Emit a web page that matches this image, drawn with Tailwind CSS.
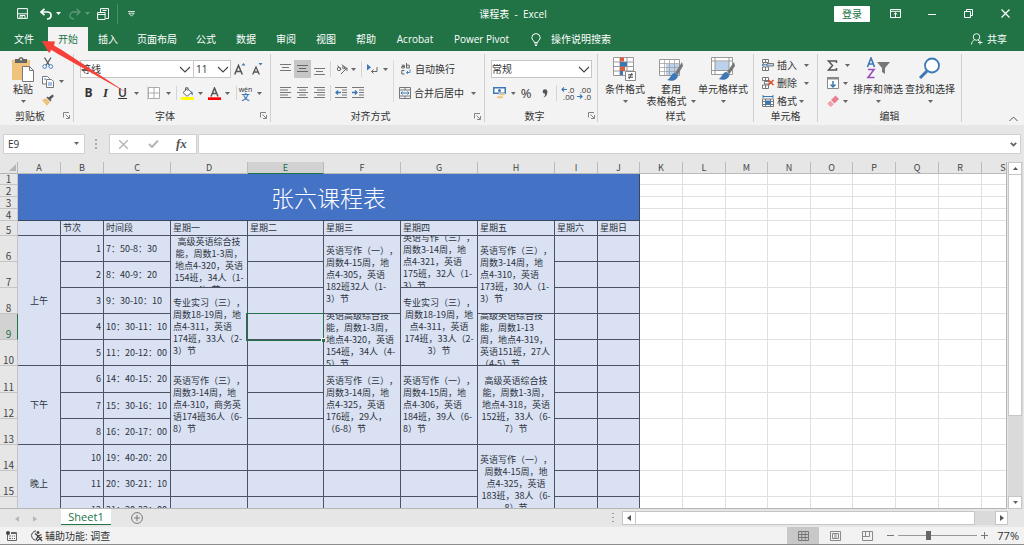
<!DOCTYPE html>
<html lang="zh-CN">
<head>
<meta charset="utf-8">
<title>课程表 - Excel</title>
<script src="https://cdn.jsdelivr.net/npm/@tailwindcss/browser@4"></script>
</head>
<body class="flex h-screen flex-col overflow-hidden bg-[#e6e6e6] font-['Open_Sans','Noto_Sans_CJK_SC',sans-serif] text-[10px] leading-3 text-[#333]">
<svg class="hidden">
  <symbol id="caret" viewBox="0 0 5 3"><path d="M0 0h5L2.5 3z" fill="#666"/></symbol>
  <symbol id="chev" viewBox="0 0 12 7"><path d="M1 1l5 5 5-5" fill="none" stroke="#444" stroke-width="1.1"/></symbol>
  <symbol id="launch" viewBox="0 0 7 7"><path d="M.5 5.500V.5H6M2.500 2.500L6 6M6.500 3v3.500H3" fill="none" stroke="#777" stroke-width=".9"/></symbol>
</svg>

<!-- Title bar -->
<header class="flex h-[27px] shrink-0 items-center bg-[#217346] text-white">
  <div class="flex flex-1 items-center pl-4">
    <button aria-label="保存" class="ml-px w-[11px]"><svg class="h-[11px] w-[11px]" viewBox="0 0 11 11" fill="none" stroke="#fff"><path d="M.6.6h9.800v9.800H.6zM.6 5.800h9.800M3 10V7.500h5V10M5 8v2"/></svg></button>
    <button aria-label="撤消" class="ml-3 w-3"><svg class="h-3 w-3" viewBox="0 0 12 12" fill="none" stroke="#fff" stroke-width="1.700"><path d="M4.500.8L1 4l3.500 3.200M1.200 4H7c2.500 0 4 1.300 4 3.300S9.500 11 7 11"/></svg></button>
    <svg class="ml-1 h-[3px] w-[5px]" viewBox="0 0 5 3"><path d="M0 0h5L2.500 3z" fill="#fff"/></svg>
    <button aria-label="恢复" class="ml-2 w-3"><svg class="h-3 w-3" viewBox="0 0 12 12" fill="none" stroke="#5a9a78" stroke-width="1.300"><path d="M7.500.8L11 4 7.500 7.200M10.800 4H5C2.500 4 1 5.300 1 7.300S2.500 11 5 11"/></svg></button>
    <svg class="ml-1 h-[3px] w-[5px]" viewBox="0 0 5 3"><path d="M0 0h5L2.500 3z" fill="#5a9a78"/></svg>
    <button aria-label="窗口" class="ml-[7px] w-3"><svg class="h-3 w-3" viewBox="0 0 12 12" fill="none" stroke="#fff"><path d="M3.500 4V.6h8v9.900h-3M.6 4.500h7.500v7H.6zM.6 6.500h7.500M5.500 2.500h4"/></svg></button>
    <span class="ml-2 h-5 w-px bg-[#4b8d69]"></span>
    <button aria-label="自定义快速访问工具栏" class="ml-[10px] w-[7px]"><svg class="h-[6px] w-[7px]" viewBox="0 0 7 6" fill="none" stroke="#fff" stroke-width=".8"><path d="M0 .5h7M.8 2.200h5.400L3.500 5.200z"/></svg></button>
  </div>
  <h1 class="text-center whitespace-pre">课程表  -  Excel</h1>
  <div class="flex flex-1 items-center justify-end pr-[14px]">
    <button class="h-4 w-9 rounded-[1px] bg-white text-[#217346]">登录</button>
    <button aria-label="功能区显示选项" class="ml-5 w-[11px]"><svg class="h-[9px] w-[11px]" viewBox="0 0 11 9" fill="none" stroke="#fff"><path d="M.5.5h10v8H.5zM.5 2.300h10M5.500 8V4M3.700 5.500l1.800-1.700 1.800 1.700"/></svg></button>
    <button aria-label="最小化" class="ml-[27px] w-2"><svg class="h-2 w-2" viewBox="0 0 8 8" stroke="#fff"><path d="M0 4.500h8"/></svg></button>
    <button aria-label="还原" class="ml-7 w-[9px]"><svg class="h-[9px] w-[9px]" viewBox="0 0 9 9" fill="none" stroke="#fff"><path d="M2.500 2.500v-2h6v6h-2M.5 2.500h6v6h-6z"/></svg></button>
    <button aria-label="关闭" class="ml-7 w-[9px]"><svg class="h-[9px] w-[9px]" viewBox="0 0 9 9" stroke="#fff" stroke-width="1.200"><path d="M.5.500l8 8M8.500.5l-8 8"/></svg></button>
  </div>
</header>

<!-- Ribbon tabs -->
<nav class="flex h-6 shrink-0 items-stretch bg-[#217346] text-white">
  <button class="w-12">文件</button>
  <button class="w-10 bg-[#f3f3f3] text-[#217346]">开始</button>
  <button class="w-10">插入</button>
  <button class="w-[58px]">页面布局</button>
  <button class="w-10">公式</button>
  <button class="w-10">数据</button>
  <button class="w-10">审阅</button>
  <button class="w-10">视图</button>
  <button class="w-10">帮助</button>
  <button class="w-[58px]">Acrobat</button>
  <button class="w-[75px]">Power Pivot</button>
  <button class="flex items-center gap-[10px] pl-3"><svg class="h-[13px] w-[10px]" viewBox="0 0 10 13" fill="none" stroke="#fff"><path d="M3.300 9.500c0-2-2.500-2.500-2.500-5A4.200 4.200 0 0 1 5 .6a4.200 4.200 0 0 1 4.200 3.900c0 2.500-2.500 3-2.500 5zM3.500 11h3M4 12.500h2"/></svg>操作说明搜索</button>
  <button class="ml-auto flex items-center gap-1 pr-[17px]"><svg class="h-3 w-3" viewBox="0 0 12 12" fill="none" stroke="#fff" stroke-width=".9"><circle cx="5.500" cy="4" r="3.300"/><path d="M.5 11.500c.3-3 1.500-4 3-4.500M7 7l1.500 1.500M9 7.500v4M7 9.500h4.500"/></svg>共享</button>
</nav>

<!-- Ribbon -->
<section class="flex h-[74px] shrink-0 items-stretch bg-[#f3f3f3] py-[3px]">
  <!-- Clipboard -->
  <div class="flex w-[74px] flex-col border-r border-[#cfcfcf]">
    <div class="flex h-[60px] pt-[3px]">
      <button class="ml-[10px] flex w-[26px] flex-col items-center">
        <svg class="h-[26px] w-6 shrink-0" viewBox="0 0 24 26"><path d="M1 3h18v20H1z" fill="#efc37c"/><path d="M4 2h3.500c0-2.500 5-2.500 5 0H16v4H4z" fill="#666"/><circle cx="10" cy="2.500" r="1" fill="#f3f3f3"/><path d="M11.500 9.500h7l4 4v11h-11z" fill="#fff" stroke="#777"/><path d="M18.500 9.500v4h4" fill="none" stroke="#777"/></svg>
        <span class="whitespace-nowrap">粘贴</span>
        <svg class="mt-[5px] h-[3px] w-[5px]"><use href="#caret"/></svg>
      </button>
      <div class="ml-[6px] flex flex-col gap-[6px]">
        <button aria-label="剪切" class="h-3"><svg class="h-3 w-3" viewBox="0 0 12 12" fill="none"><path d="M2.500.5l5 8M9 .5l-5 8" stroke="#555" stroke-width="1.300"/><circle cx="2.700" cy="9.500" r="1.900" stroke="#4a86c0"/><circle cx="8.800" cy="9.500" r="1.900" stroke="#4a86c0"/></svg></button>
        <button aria-label="复制" class="flex h-[13px] items-center gap-[5px]"><svg class="h-3 w-3" viewBox="0 0 12 12" stroke="#777" fill="#fff"><path d="M.5.500h5l2 2v5.500h-7z"/><path d="M4.500 3.500h5l2 2v6h-7z"/><path d="M2 3h2M6 7h4M6 9h4" stroke="#4a86c0"/></svg><svg class="h-[3px] w-[5px]"><use href="#caret"/></svg></button>
        <button aria-label="格式刷" class="h-3"><svg class="h-3 w-3" viewBox="0 0 12 12"><path d="M0 6l4-2 4 4-3 4z" fill="#efc37c"/><path d="M4.500 3.500l4 4 1-1-1-1L12 2l-1.500-1.500L6.500 3.500l-1-1z" fill="#555"/></svg></button>
      </div>
    </div>
    <div class="flex h-[13px] items-center justify-between pr-[3px] pl-[15px]"><span>剪贴板</span><button aria-label="剪贴板选项"><svg class="h-[7px] w-[7px]"><use href="#launch"/></svg></button></div>
  </div>

  <!-- Font -->
  <div class="flex w-[197px] flex-col border-r border-[#cfcfcf]">
    <div class="h-[60px] pt-[6px]">
      <div class="flex h-[18px] items-center pl-[6px]">
        <div class="relative h-[18px] w-[114px]"><select aria-label="字体" class="h-full w-full appearance-none border border-[#c6c6c6] bg-white"><option>等线</option></select><svg class="pointer-events-none absolute top-[6px] right-[3px] h-[7px] w-3"><use href="#chev"/></svg></div>
        <div class="relative h-[18px] w-[37px]"><select aria-label="字号" class="h-full w-full appearance-none border border-l-0 border-[#c6c6c6] bg-white pl-[2px]"><option>11</option></select><svg class="pointer-events-none absolute top-[6px] right-[2px] h-[7px] w-3"><use href="#chev"/></svg></div>
        <button aria-label="增大字号" class="ml-[3px]"><svg class="h-3 w-3" viewBox="0 0 12 12"><path d="M.7 11.500L4.500 2.500l3.800 9M2 8.500h5" fill="none" stroke="#555" stroke-width="1.500"/><path d="M7.500 2.500L9.500 0l2 2.500z" fill="#3b78b5"/></svg></button>
        <button aria-label="减小字号" class="ml-[6px]"><svg class="h-3 w-3" viewBox="0 0 12 12"><path d="M.7 11.500L4 4l3.300 7.500M2 9h4" fill="none" stroke="#555" stroke-width="1.300"/><path d="M6.500 0h4l-2 2.500z" fill="#3b78b5"/></svg></button>
      </div>
      <div class="mt-[6px] flex h-[18px] items-center pl-[9px]">
        <button class="w-[11px] text-[12px] font-bold">B</button>
        <button class="ml-[6px] w-[11px] font-['Liberation_Serif'] text-[13px] font-bold italic">I</button>
        <button class="ml-[6px] w-[11px] text-[12px] font-semibold underline">U</button>
        <svg class="ml-[6px] h-[3px] w-[5px]"><use href="#caret"/></svg>
        <span class="ml-[8px] h-[14px] w-px bg-[#d5d5d5]"></span>
        <button aria-label="边框"><svg class="h-3 w-3" viewBox="0 0 12 12" fill="#fff" stroke="#aaa"><path d="M.5.5h11v11H.5zM6 .5v11M.5 6h11"/></svg></button>
        <svg class="ml-[6px] h-[3px] w-[5px]"><use href="#caret"/></svg>
        <span class="ml-[5px] h-[14px] w-px bg-[#d5d5d5]"></span>
        <button aria-label="填充颜色" class="ml-1"><svg class="h-[13px] w-[13px]" viewBox="0 0 13 13"><path d="M2 5.500L6.500 1.500l4 4-4.500 3.800z" fill="#fff" stroke="#666"/><path d="M4.500 4V.8h2.500v3" fill="none" stroke="#666"/><path d="M10.500 4c1.500 1 1.500 3 1 4.500l-1.500-2z" fill="#3b78b5"/><path d="M0 10h13v3H0z" fill="#ff0"/></svg></button>
        <svg class="ml-1 h-[3px] w-[5px]"><use href="#caret"/></svg>
        <button aria-label="字体颜色" class="ml-[5px]"><svg class="h-[13px] w-[13px]" viewBox="0 0 13 13"><path d="M3 9.500L6.500 1l3.500 8.500M4 6.500h5" fill="none" stroke="#555" stroke-width="1.500"/><path d="M0 10.300h13v2.700H0z" fill="red"/></svg></button>
        <svg class="ml-1 h-[3px] w-[5px]"><use href="#caret"/></svg>
        <span class="ml-[6px] h-[14px] w-px bg-[#d5d5d5]"></span>
        <button class="ml-px flex w-[15px] flex-col items-center text-[7px] leading-[6px]"><span>wén</span><span class="text-[8px] leading-[7px] font-bold text-[#3b78b5]">文</span></button>
        <svg class="ml-1 h-[3px] w-[5px]"><use href="#caret"/></svg>
      </div>
    </div>
    <div class="flex h-[13px] items-center pr-[3px]"><span class="flex-1 pr-3 pl-2 text-center">字体</span><button aria-label="字体选项"><svg class="h-[7px] w-[7px]"><use href="#launch"/></svg></button></div>
  </div>

  <!-- Alignment -->
  <div class="flex w-[214px] flex-col border-r border-[#cfcfcf]">
    <div class="flex h-[60px] pt-[6px] pb-2">
      <div class="w-[123px] border-r border-[#dcdcdc] pl-[6px]">
        <div class="flex h-[18px] items-center">
          <button aria-label="顶端对齐" class="flex h-[18px] w-[17px] items-center justify-center"><svg class="h-3 w-[11px]" viewBox="0 0 11 12" stroke="#777"><path d="M0 1.500h11M2 4.500h7M0 7.500h11"/></svg></button>
          <button aria-label="垂直居中" class="flex h-[18px] w-[17px] items-center justify-center bg-[#c6c6c6]"><svg class="h-3 w-[11px]" viewBox="0 0 11 12" stroke="#666"><path d="M0 2.500h11M2 5.500h7M0 8.500h11"/></svg></button>
          <button aria-label="底端对齐" class="flex h-[18px] w-[17px] items-center justify-center"><svg class="h-3 w-[11px]" viewBox="0 0 11 12" stroke="#777"><path d="M0 5.500h11M2 8.500h7M0 11.500h11"/></svg></button>
          <span class="ml-[2px] h-4 w-px bg-[#d5d5d5]"></span>
          <button aria-label="方向" class="ml-[5px]"><svg class="h-3 w-3" viewBox="0 0 12 12" fill="none" stroke="#666"><circle cx="3" cy="6" r="1.700"/><path d="M1.500 2.500l3.500 4M6 1.500l3 4M5 11l6-6M11 8V5H8"/><circle cx="7.700" cy="4.500" r="1.300"/></svg></button>
          <svg class="ml-[3px] h-[3px] w-[5px]"><use href="#caret"/></svg>
          <span class="ml-[5px] h-4 w-px bg-[#d5d5d5]"></span>
          <button aria-label="文字方向" class="ml-1"><svg class="h-3 w-3" viewBox="0 0 12 12" fill="none"><path d="M1 1l4 3.200L1 7.500z" fill="#3b78b5"/><path d="M11 4v4.500H5.500M7.500 6.500l-2 2 2 2" stroke="#666"/></svg></button>
          <svg class="ml-[5px] h-[3px] w-[5px]"><use href="#caret"/></svg>
        </div>
        <div class="mt-[6px] flex h-[18px] items-center">
          <button aria-label="左对齐" class="flex w-[17px] justify-center"><svg class="h-3 w-[11px]" viewBox="0 0 11 12" stroke="#777"><path d="M0 .5h11M0 3h8M0 5.500h11M0 8h8M0 10.500h11"/></svg></button>
          <button aria-label="居中" class="flex w-[17px] justify-center"><svg class="h-3 w-[11px]" viewBox="0 0 11 12" stroke="#777"><path d="M0 .5h11M2 3h7M0 5.500h11M2 8h7M0 10.500h11"/></svg></button>
          <button aria-label="右对齐" class="flex w-[17px] justify-center"><svg class="h-3 w-[11px]" viewBox="0 0 11 12" stroke="#777"><path d="M0 .5h11M3 3h8M0 5.500h11M3 8h8M0 10.500h11"/></svg></button>
          <span class="ml-[2px] h-4 w-px bg-[#d5d5d5]"></span>
          <button aria-label="减少缩进量" class="ml-1"><svg class="h-3 w-3" viewBox="0 0 12 12" fill="none" stroke="#777"><path d="M0 .5h12M7 3h5M7 5.500h5M7 8h5M0 10.500h12"/><path d="M6 5.500H1M3 3.500l-2 2 2 2" stroke="#3b78b5" stroke-width="1.300"/></svg></button>
          <button aria-label="增加缩进量" class="ml-[5px]"><svg class="h-3 w-3" viewBox="0 0 12 12" fill="none" stroke="#777"><path d="M0 .5h12M7 3h5M7 5.500h5M7 8h5M0 10.500h12"/><path d="M0 5.500h5M3 3.500l2 2-2 2" stroke="#3b78b5" stroke-width="1.300"/></svg></button>
        </div>
      </div>
      <div class="flex-1 pl-[5px]">
        <button class="flex h-[18px] items-center gap-1 pl-[2px]"><svg class="h-3 w-[10px]" viewBox="0 0 10 12" fill="none" stroke="#555" stroke-width=".9"><path d="M.8 2.200h2.500V5H.8V3.500h2.500M5.500 0v5h2.800V2.200H5.500M3.500 7.500H.8v3.500h2.700"/><path d="M9 6.500v3H5.500M7 8L5.500 9.500 7 11" stroke="#3b78b5"/></svg>自动换行</button>
        <button class="mt-[6px] flex h-[18px] items-center gap-[3px]"><svg class="h-3 w-3" viewBox="0 0 12 12" fill="none" stroke="#777"><path d="M.5.5h11v11H.5zM.5 3h11M.5 9h11M6 .5V3M6 9v2.500"/><path d="M2 6h8M3.500 4.500L2 6l1.500 1.500M8.500 4.500L10 6 8.500 7.500" stroke="#3b78b5"/></svg>合并后居中<svg class="ml-1 h-[3px] w-[5px]"><use href="#caret"/></svg></button>
      </div>
    </div>
    <div class="flex h-[13px] items-center pr-[3px]"><span class="flex-1 pr-1 text-center">对齐方式</span><button aria-label="对齐选项"><svg class="h-[7px] w-[7px]"><use href="#launch"/></svg></button></div>
  </div>

  <!-- Number -->
  <div class="flex w-[113px] flex-col border-r border-[#cfcfcf]">
    <div class="h-[60px] px-[6px] pt-[6px]">
      <div class="relative h-[18px] w-[101px]"><select aria-label="数字格式" class="h-full w-full appearance-none border border-[#c6c6c6] bg-white"><option>常规</option></select><svg class="pointer-events-none absolute top-[6px] right-[2px] h-[7px] w-3"><use href="#chev"/></svg></div>
      <div class="mt-[6px] flex h-[18px] items-center">
        <button aria-label="会计数字格式" class="ml-[2px]"><svg class="h-3 w-[13px]" viewBox="0 0 13 12"><path d="M0 0h13v7H0z" fill="#3b78b5"/><path d="M1.500 1.500h10v4h-10z" fill="#fff"/><circle cx="6.500" cy="3.500" r="1.500" fill="#3b78b5"/><path d="M6 6.500h6v2H6zM4 9h6v2.500H4z" fill="#efc37c" stroke="#f3f3f3" stroke-width=".5"/></svg></button>
        <svg class="ml-[5px] h-[3px] w-[5px]"><use href="#caret"/></svg>
        <button class="ml-1 w-[14px] text-[13px]">%</button>
        <button aria-label="千位分隔样式" class="ml-[9px]"><svg class="h-[9px] w-[6px]" viewBox="0 0 6 9" fill="#555"><circle cx="3" cy="2.500" r="2.300"/><path d="M5.300 2.500C5.500 6 4 7.500 1.500 8.500c1.500-1.500 2-3 1.500-5z"/></svg></button>
        <span class="ml-2 h-4 w-px bg-[#d5d5d5]"></span>
        <button aria-label="增加小数位数" class="ml-1 flex w-[14px] flex-col items-end text-[8px] leading-[7px]"><span class="flex items-center gap-px"><svg class="h-[5px] w-[6px]" viewBox="0 0 6 5" fill="none" stroke="#3b78b5" stroke-width="1.200"><path d="M6 2.500H1M3 .5l-2 2 2 2"/></svg>.0</span><span>.00</span></button>
        <button aria-label="减少小数位数" class="ml-[3px] flex w-[14px] flex-col items-end text-[8px] leading-[7px]"><span>.00</span><span class="flex items-center gap-px"><svg class="h-[5px] w-[6px]" viewBox="0 0 6 5" fill="none" stroke="#3b78b5" stroke-width="1.200"><path d="M0 2.500h5M3 .5l2 2-2 2"/></svg>.0</span></button>
      </div>
    </div>
    <div class="flex h-[13px] items-center pr-[2px]"><span class="flex-1 pr-1 text-center">数字</span><button aria-label="数字选项"><svg class="h-[7px] w-[7px]"><use href="#launch"/></svg></button></div>
  </div>

  <!-- Styles -->
  <div class="flex w-[156px] flex-col border-r border-[#cfcfcf]">
    <div class="flex h-[60px] pt-[3px] pl-1">
      <button class="flex w-[46px] flex-col items-center"><svg class="h-[26px] w-6 shrink-0" viewBox="0 0 24 26"><path d="M.5.5h20v18H.5zM.5 5h20M.5 9.500h20M.5 14h20M7 .5v18M14 .5v18" fill="#fff" stroke="#999"/><path d="M7 .5h4v4H7zM7 9.500h5V14H7z" fill="#dc5b3d"/><path d="M7 5h7v4.500H7zM7 14h3v4H7z" fill="#3b78b5"/><path d="M12.500 14.500h10v9h-10z" fill="#fff" stroke="#888"/><path d="M15 17.800h5M15 20.200h5M19 16l-3 6" stroke="#444"/></svg><span class="whitespace-nowrap">条件格式</span><svg class="mt-[5px] h-[3px] w-[5px]"><use href="#caret"/></svg></button>
      <button class="flex w-[46px] flex-col items-center"><svg class="h-[26px] w-6 shrink-0" viewBox="0 0 24 26"><path d="M.5 2.500h20v16H.5z" fill="#fff" stroke="#999"/><path d="M7 7h13v11H7z" fill="#bcd2ec"/><path d="M.5 6.500h20M.5 10.500h20M.5 14.500h20M5.500 2.500v16M10.500 2.500v16M15.500 2.500v16" fill="none" stroke="#999" stroke-width=".7"/><path d="M23 5l-7 11 2.500 2L24 9z" fill="#777"/><path d="M16 16c-4 0-4 5-8 7 5 1.500 10 1 11-4.500z" fill="#3b78b5"/></svg><span>套用</span><span class="flex items-center gap-1 whitespace-nowrap">表格格式<svg class="h-[3px] w-[5px]"><use href="#caret"/></svg></span></button>
      <button class="ml-1 flex w-[50px] flex-col items-center"><svg class="h-[26px] w-6 shrink-0" viewBox="0 0 24 26"><path d="M.5.5h21v17H.5z" fill="#fff" stroke="#999"/><path d="M4 4.500h14v9H4z" fill="#bcd2ec"/><path d="M.5 4h21M.5 13.500h21M4 .5v17M18 .5v17" fill="none" stroke="#999"/><path d="M23 5l-7 10 2.500 2L24 9z" fill="#777"/><path d="M15.500 15c-4 0-4 5-8 7 5 1.500 10 1 11-4.500z" fill="#3b78b5"/></svg><span class="whitespace-nowrap">单元格样式</span><svg class="mt-[5px] h-[3px] w-[5px]"><use href="#caret"/></svg></button>
    </div>
    <span class="text-center">样式</span>
  </div>

  <!-- Cells -->
  <div class="flex w-16 flex-col border-r border-[#cfcfcf]">
    <div class="flex h-[60px] flex-col items-start pt-[2px] pl-2">
      <button class="flex h-[18px] items-center"><svg class="mr-[3px] h-3 w-3" viewBox="0 0 12 12" fill="#fff" stroke="#777"><path d="M.5.5h6v3h-6zM.5 8h6v3.500h-6zM3.500.5v3M3.500 8v3.500"/><path d="M5 4.500h6.500V7H5z" fill="#bcd2ec"/><path d="M5 5.800H0M2 4L0 5.800 2 7.500" fill="none" stroke="#3b78b5"/></svg>插入<svg class="ml-[7px] h-[3px] w-[5px]"><use href="#caret"/></svg></button>
      <button class="flex h-[18px] items-center"><svg class="mr-[3px] h-3 w-3" viewBox="0 0 12 12" fill="#fff" stroke="#777"><path d="M.5.5h6v3h-6zM.5 8h6v3.500h-6zM3.500.5v3M3.500 8v3.500M2.500 4.500H7V7H2.500z"/><path d="M6.500 3l5 5M11.500 3l-5 5" stroke="#dc4b2d" stroke-width="1.500"/></svg>删除<svg class="ml-[7px] h-[3px] w-[5px]"><use href="#caret"/></svg></button>
      <button class="flex h-[18px] items-center"><svg class="mr-[3px] h-3 w-3" viewBox="0 0 12 12" fill="#fff" stroke="#777"><path d="M.5 4h11v7.500H.5zM.5 6.500h11M.5 9.500h11M3.500 4v7.500M8.500 4v7.500"/><path d="M3.500 5.500h5V10h-5z" fill="#3b78b5" stroke="none"/><path d="M1 1.500h10M1 0v3M11 0v3" stroke="#3b78b5"/></svg>格式<svg class="ml-[2px] h-[3px] w-[5px]"><use href="#caret"/></svg></button>
    </div>
    <span class="text-center">单元格</span>
  </div>

  <!-- Editing -->
  <div class="flex w-[144px] flex-col border-r border-[#cfcfcf]">
    <div class="flex h-[60px] pl-[9px]">
      <div class="flex w-[26px] flex-col items-start pt-[2px]">
        <button aria-label="自动求和" class="flex h-[18px] items-center gap-[7px]"><svg class="h-[11px] w-[11px]" viewBox="0 0 11 11" fill="none" stroke="#555" stroke-width="1.500"><path d="M9.500 3V1H1.500l4 4.500-4 4.500h8V8"/></svg><svg class="h-[3px] w-[5px]"><use href="#caret"/></svg></button>
        <button aria-label="填充" class="flex h-[18px] items-center gap-1"><svg class="h-3 w-3" viewBox="0 0 12 12"><path d="M.5.5h11v11H.5z" fill="#fff" stroke="#888"/><path d="M0 0h12v2.500H0z" fill="#888"/><path d="M6 4v6M3.500 7.500L6 10l2.500-2.500" fill="none" stroke="#3b78b5" stroke-width="1.500"/></svg><svg class="h-[3px] w-[5px]"><use href="#caret"/></svg></button>
        <button aria-label="清除" class="flex h-[18px] items-center gap-1"><svg class="h-3 w-3" viewBox="0 0 12 12"><path d="M4 5l4.500-4.500L12 4 7.500 8.500z" fill="#e87f90"/><path d="M3.300 5.700L6.800 9.200 4.500 11.500H3L.8 9.300V8z" fill="#f0a0ac"/></svg><svg class="h-[3px] w-[5px]"><use href="#caret"/></svg></button>
      </div>
      <button class="flex w-[50px] flex-col items-center pt-[3px]"><svg class="h-[26px] w-6 shrink-0" viewBox="0 0 24 26" fill="none" stroke-width="1.600"><path d="M1.500 10L5 1l3.500 9M2.500 7h5" stroke="#3b78b5"/><path d="M2 12.500h6L2 20.500h6.500" stroke="#9a4fc0"/><path d="M11 5h13l-5 6v6l-3-2v-4z" fill="#777"/></svg><span class="whitespace-nowrap">排序和筛选</span><svg class="mt-[5px] h-[3px] w-[5px]"><use href="#caret"/></svg></button>
      <button class="ml-[2px] flex w-[50px] flex-col items-center pt-[3px]"><svg class="h-[26px] w-6 shrink-0" viewBox="0 0 24 26" fill="none" stroke="#3b78b5"><circle cx="14" cy="8.500" r="7" fill="#fff" stroke-width="1.800"/><path d="M9 14l-7 7" stroke-width="3"/></svg><span class="whitespace-nowrap">查找和选择</span><svg class="mt-[5px] h-[3px] w-[5px]"><use href="#caret"/></svg></button>
    </div>
    <span class="text-center">编辑</span>
  </div>
  <button aria-label="折叠功能区" class="mt-auto mr-[6px] ml-auto"><svg class="h-[6px] w-[9px]" viewBox="0 0 9 6" fill="none" stroke="#555"><path d="M.5 5l4-4 4 4"/></svg></button>
</section>

<!-- Formula bar -->
<section class="flex h-[37px] shrink-0 items-start pt-[9px] pr-[3px] pl-[3px]">
  <div class="relative h-5 w-[82px]"><input aria-label="名称框" value="E9" class="h-full w-full border border-[#d0d0d0] bg-white pl-1"><svg class="pointer-events-none absolute top-2 right-[6px] h-[3px] w-[5px]"><use href="#caret"/></svg></div>
  <svg class="mt-[5px] ml-[10px] h-[10px] w-[2px]" viewBox="0 0 2 10" fill="#aaa"><path d="M0 0h2v2H0zM0 4h2v2H0zM0 8h2v2H0z"/></svg>
  <div class="ml-3 flex h-5 w-[88px] items-center border border-[#d0d0d0] bg-white">
    <button aria-label="取消" class="ml-[9px]"><svg class="h-[9px] w-[9px]" viewBox="0 0 9 9" stroke="#b5b5b5" stroke-width="1.400"><path d="M0 0l9 9M9 0L0 9"/></svg></button>
    <button aria-label="输入" class="ml-5"><svg class="h-2 w-[11px]" viewBox="0 0 11 8" fill="none" stroke="#b5b5b5" stroke-width="2"><path d="M1 4l3 3 6-6.500"/></svg></button>
    <button aria-label="插入函数" class="ml-[17px] font-['Liberation_Serif'] text-[13px] font-bold text-[#555] italic">fx</button>
  </div>
  <div class="relative ml-px h-5 flex-1"><input aria-label="编辑栏" class="h-full w-full border border-[#d0d0d0] bg-white"><svg class="pointer-events-none absolute top-[8px] right-1 h-[5px] w-[7px]" viewBox="0 0 7 5" fill="none" stroke="#666" stroke-width="1.800"><path d="M.8.800l2.700 2.700L6.200.8"/></svg></div>
</section>

<!-- Worksheet -->
<main class="flex min-h-0 flex-1">
  <div class="relative min-w-0 flex-1 overflow-hidden border-r border-b border-[#b5b5b5]">
    <table id="sheet" class="w-max table-fixed border-separate border-spacing-0 bg-white font-['Noto_Sans_CJK_SC',sans-serif] text-[9px] text-[#2c3340] [text-spacing-trim:space-all]"></table>
    <div class="pointer-events-none absolute top-[151px] left-[246px] h-[28px] w-[78px] border border-[#217346]"><span class="absolute -right-[2px] -bottom-[2px] h-[4px] w-[4px] border-t border-l border-white bg-[#217346]"></span></div>
  </div>
  <div class="ml-px flex w-[15px] flex-col bg-[#dadada] pr-px">
    <button aria-label="向上滚动" class="flex h-[13px] items-center justify-center border border-[#c6c6c6] bg-white"><svg class="h-[3px] w-[5px]" viewBox="0 0 5 3"><path d="M0 3h5L2.500 0z" fill="#555"/></svg></button>
    <div class="h-[69.500%] border border-t-0 border-[#c6c6c6] bg-white"></div>
    <button aria-label="向下滚动" class="mt-auto flex h-[13px] items-center justify-center border border-[#c6c6c6] bg-white"><svg class="h-[3px] w-[5px]"><use href="#caret"/></svg></button>
  </div>
  <div class="w-px"></div>
</main>

<!-- Sheet tabs -->
<section class="flex h-[18px] shrink-0 items-start">
  <button aria-label="上一个工作表" class="mt-[7px] ml-[15px]"><svg class="h-[6px] w-1" viewBox="0 0 4 6"><path d="M4 0v6L0 3z" fill="#b8b8b8"/></svg></button>
  <button aria-label="下一个工作表" class="mt-[7px] ml-[14px]"><svg class="h-[6px] w-1" viewBox="0 0 4 6"><path d="M0 0v6l4-3z" fill="#b8b8b8"/></svg></button>
  <button class="ml-6 h-4 w-[50px] border-b border-[#217346] bg-white text-[11px] leading-[14px] text-[#217346]">Sheet1</button>
  <button aria-label="新工作表" class="mt-[3px] ml-5"><svg class="h-3 w-3" viewBox="0 0 12 12" fill="none" stroke="#777"><circle cx="6" cy="6" r="5.400"/><path d="M6 3v6M3 6h6"/></svg></button>
  <svg class="mt-[4px] ml-auto h-[9px] w-[2px]" viewBox="0 0 2 9" fill="#999"><path d="M0 0h2v1H0zM0 4h2v1H0zM0 8h2v1H0z"/></svg>
  <div class="mt-[2px] mr-4 ml-2 flex h-[14px] w-[386px] bg-[#dadada]">
    <button aria-label="向左滚动" class="flex w-[14px] items-center justify-center border border-[#c6c6c6] bg-white"><svg class="h-[6px] w-1" viewBox="0 0 4 6"><path d="M4 0v6L0 3z" fill="#555"/></svg></button>
    <div class="w-[339px] border border-l-0 border-[#c6c6c6] bg-white"></div>
    <button aria-label="向右滚动" class="ml-auto flex w-[13px] items-center justify-center border border-[#c6c6c6] bg-white"><svg class="h-[6px] w-1" viewBox="0 0 4 6"><path d="M0 0v6l4-3z" fill="#555"/></svg></button>
  </div>
</section>

<!-- Status bar -->
<footer class="flex h-[18px] shrink-0 items-center border-b border-[#8c8c8c] bg-[#f2f2f2]">
  <svg class="ml-[6px] h-[10px] w-[11px]" viewBox="0 0 11 10"><path d="M1.500 3v6.500h9V1.500H5" fill="none" stroke="#666"/><circle cx="2" cy="2" r="2" fill="#444"/><path d="M3 5h2M6 5h1M8 5h1M3 7.500h2M6 7.500h1M8 7.500h1M5 2.500h6" stroke="#666"/></svg>
  <button class="ml-[14px] flex items-center gap-[2px] whitespace-pre"><svg class="h-3 w-3" viewBox="0 0 12 12" fill="none" stroke="#444"><path d="M5 .8C2 1.500.6 3.500.6 5.500c0 2.500 1.900 4.300 4 4.800"/><path d="M4 3.500l3 2.500 3.500-1.500M7 6l-2 4M7 6l4 5M6 11l5-4" stroke-width="1.300"/><circle cx="7" cy="2.500" r="1" fill="#444"/></svg>辅助功能: 调查</button>
  <button aria-label="普通" class="ml-auto flex h-full w-8 items-center justify-center bg-[#c8c8c8]"><svg class="h-[10px] w-[11px]" viewBox="0 0 11 10" fill="none" stroke="#777"><path d="M.5.500h10v9H.5zM.5 3.500h10M.5 6.500h10M3.800.5v9M7.200.5v9"/></svg></button>
  <button aria-label="页面布局视图" class="flex w-8 justify-center"><svg class="h-[10px] w-[11px]" viewBox="0 0 11 10" fill="none" stroke="#888"><path d="M.5.5h10v9H.5zM2.500 2.500h6v5h-6zM4 4h3M4 6h3"/></svg></button>
  <button aria-label="分页预览" class="flex w-8 justify-center"><svg class="h-[10px] w-[11px]" viewBox="0 0 11 10" fill="none" stroke="#888"><path d="M.5.500h10v9H.5zM3.500.5v5M7.500.5v5M.5 5.500h7"/></svg></button>
  <button aria-label="缩小" class="ml-1 flex w-[7px]"><svg class="h-[7px] w-[7px]" viewBox="0 0 7 7" stroke="#777"><path d="M0 3.500h7"/></svg></button>
  <input aria-label="缩放" type="range" min="0" max="100" value="37" class="ml-1 h-px w-[79px] appearance-none bg-[#999] [&::-webkit-slider-thumb]:h-[9px] [&::-webkit-slider-thumb]:w-[5px] [&::-webkit-slider-thumb]:appearance-none [&::-webkit-slider-thumb]:bg-[#666]">
  <button aria-label="放大" class="ml-1 flex w-[7px]"><svg class="h-[7px] w-[7px]" viewBox="0 0 7 7" stroke="#777"><path d="M0 3.500h7M3.500 0v7"/></svg></button>
  <span class="mr-[5px] ml-[9px] text-[11px]">77%</span>
</footer>

<!-- Pointer arrow over the ribbon -->
<svg class="pointer-events-none absolute top-[38px] left-10 h-[60px] w-[90px]" viewBox="0 0 90 60"><path d="M2 3l13 .5-1 4 7 4L88 55.500 18 16l-6.500-4L9 15z" fill="#f7403a"/></svg>

<script>
  const cols = [43, 43, 67, 77, 76, 77, 77, 77, 43, 42, 43, 43, 42, 43, 42, 43, 43, 43, 43];
  const heights = [11, 12, 12, 12, 15, 26, 26, 26, 26, 26, 27, 26, 26, 26, 26, 26];
  const used = 10;
  // key: cell address; value: [row span, alignment, text]
  const cells = {
    B5: [1, 'l', '节次'], C5: [1, 'l', '时间段'], D5: [1, 'l', '星期一'], E5: [1, 'l', '星期二'], F5: [1, 'l', '星期三'],
    G5: [1, 'l', '星期四'], H5: [1, 'l', '星期五'], I5: [1, 'l', '星期六'], J5: [1, 'l', '星期日'],
    A6: [5, 'c', '上午'], A11: [3, 'c', '下午'], A14: [3, 'c', '晚上'],
    D6: [2, 't', '高级英语综合技\n能，周数1-3周，\n地点4-320，英语\n154班，34人（1-\n4）节'],
    F6: [3, 'l', '英语写作（一），\n周数4-15周，地\n点4-305，英语\n182班32人（1-\n3）节'],
    G6: [2, 'l', '英语写作（三），\n周数3-14周，地\n点4-321，英语\n175班，32人（1-\n3）节'],
    H6: [3, 'l', '英语写作（三），\n周数3-14周，地\n点4-310，英语\n173班，30人（1-\n3）节'],
    D8: [3, 'l', '专业实习（三），\n周数18-19周，地\n点4-311，英语\n174班，33人（2-\n3）节'],
    G8: [3, 'c', '专业实习（三），\n周数18-19周，地\n点4-311，英语\n174班，33人（2-\n3）节'],
    F9: [2, 'l', '英语高级综合技\n能，周数1-3周，\n地点4-320，英语\n154班，34人（4-\n5）节'],
    H9: [2, 'l', '高级英语综合技\n能，周数1-13\n周，地点4-319，\n英语151班，27人\n（4-5）节'],
    D11: [3, 'l', '英语写作（三），\n周数3-14周，地\n点4-310，商务英\n语174班36人（6-\n8）节'],
    F11: [3, 'l', '英语写作（三），\n周数3-14周，地\n点4-325，英语\n176班，29人，\n（6-8）节'],
    G11: [3, 'l', '英语写作（一），\n周数4-15周，地\n点4-306，英语\n184班，39人（6-\n8）节'],
    H11: [3, 'c', '高级英语综合技\n能，周数1-3周，\n地点4-318，英语\n152班，33人（6-\n7）节'],
    H14: [3, 'c', '英语写作（一），\n周数4-15周，地\n点4-325，英语\n183班，38人（6-\n8）节'],
  };
  const periods = [[1, '7：50-8：30'], [2, '8：40-9：20'], [3, '9：30-10：10'], [4, '10：30-11：10'], [5, '11：20-12：00'],
    [6, '14：40-15：20'], [7, '15：30-16：10'], [8, '16：20-17：00'], [10, '19：40-20：20'], [11, '20：30-21：10'], [12, '21：20-22：00']];
  periods.forEach(([n, t], i) => { cells['B' + (6 + i)] = [1, 'r', String(n)]; cells['C' + (6 + i)] = [1, 'l', t]; });

  const align = {
    l: 'items-center justify-start text-left pl-[2px]',
    r: 'items-center justify-end text-right pr-[2px]',
    c: 'items-center justify-center text-center',
    t: 'items-start justify-center text-center',
  };
  const letter = i => String.fromCharCode(65 + i);
  let html = '<colgroup><col style="width:18px">' + cols.map(w => `<col style="width:${w}px">`).join('') + '</colgroup><thead><tr class="h-3">';
  html += '<th class="border-r border-b border-[#b5b5b5] bg-[#e6e6e6] p-0"><svg class="mr-px ml-auto h-[7px] w-[7px]" viewBox="0 0 7 7"><path d="M7 0v7H0z" fill="#b5b5b5"/></svg></th>';
  cols.forEach((w, i) => {
    html += i === 4
      ? '<th scope="col" class="border-r border-b border-r-[#bbb] border-b-[#217346] bg-[#d2d2d2] p-0 leading-[11px] font-normal text-[#217346]">E</th>'
      : `<th scope="col" class="border-r border-b border-[#bbb] bg-[#e6e6e6] p-0 leading-[11px] font-normal text-[#444]">${letter(i)}</th>`;
  });
  html += '</tr></thead><tbody>';
  const covered = new Set();
  heights.forEach((h, r) => {
    const n = r + 1;
    html += `<tr style="height:${h}px">`;
    html += n === 9
      ? '<th scope="row" class="border-r border-b border-r-[#217346] border-b-[#c4c4c4] bg-[#d2d2d2] p-0 align-bottom text-[10px] leading-[10px] font-normal text-[#217346]">9</th>'
      : `<th scope="row" class="border-r border-b border-[#c4c4c4] bg-[#e6e6e6] p-0 align-bottom text-[10px] leading-[10px] font-normal text-[#444]">${n}</th>`;
    if (n === 1) html += `<td colspan="${used}" rowspan="4" class="border-r border-b border-[#3a4660] bg-[#4472c4] p-0 text-center text-[23px] leading-8 font-light text-white">张六课程表</td>`;
    cols.forEach((w, c) => {
      if (c < used && n <= 4) return;
      const key = letter(c) + n;
      if (covered.has(key)) return;
      if (c >= used) { html += '<td class="border-r border-b border-[#e0e0e0] p-0"></td>'; return; }
      const [span, a, text] = cells[key] || [1, 'l', ''];
      let total = 0;
      for (let k = 0; k < span; k++) { total += heights[r + k]; covered.add(letter(c) + (n + k)); }
      html += `<td rowspan="${span}" class="border-r border-b border-[#4c5362] bg-[#d9e1f2] p-0"><div class="flex overflow-hidden leading-3 whitespace-pre ${align[a]}" style="height:${total - 1}px">${text}</div></td>`;
    });
    html += '</tr>';
  });
  document.getElementById('sheet').innerHTML = html + '</tbody>';
</script>
</body>
</html>
